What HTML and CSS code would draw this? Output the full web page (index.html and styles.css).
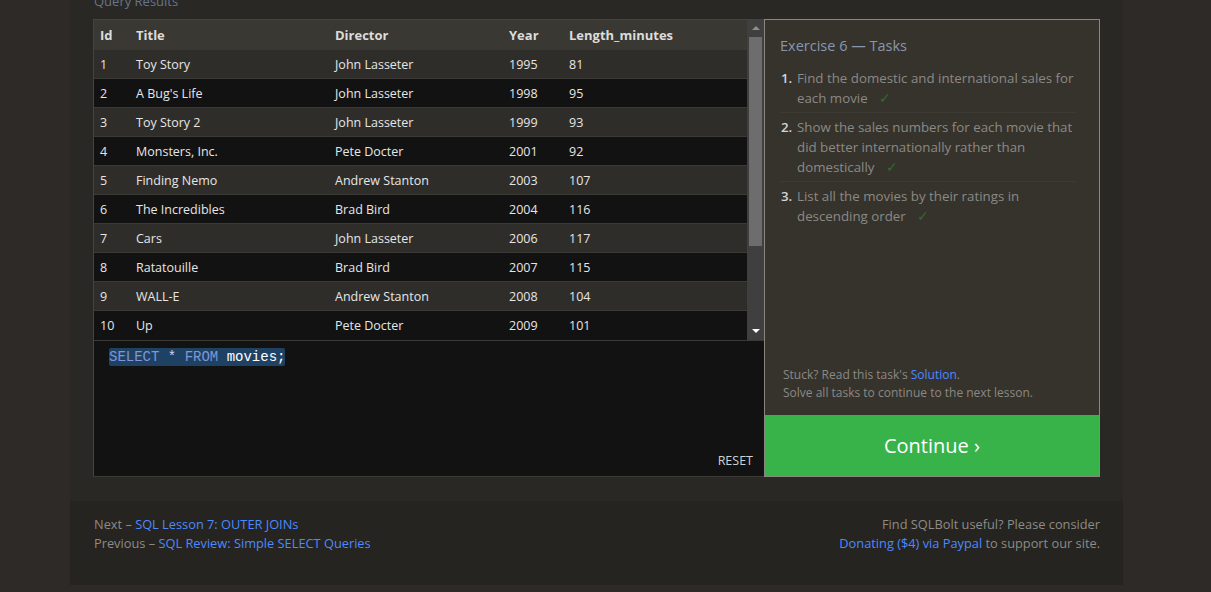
FILE: index.html
```html
<!DOCTYPE html>
<html>
<head>
<meta charset="utf-8">
<link rel="stylesheet" href="styles.css">
</head>
<body>
<div class="page">
  <div class="section-title">Query Results</div>
  <div class="exercise">
    <div class="left">
      <div class="results">
        <table class="grid">
          <thead>
            <tr><th class="c-id">Id</th><th class="c-title">Title</th><th class="c-dir">Director</th><th class="c-year">Year</th><th>Length_minutes</th></tr>
          </thead>
          <tbody>
            <tr><td>1</td><td>Toy Story</td><td>John Lasseter</td><td>1995</td><td>81</td></tr>
            <tr><td>2</td><td>A Bug's Life</td><td>John Lasseter</td><td>1998</td><td>95</td></tr>
            <tr><td>3</td><td>Toy Story 2</td><td>John Lasseter</td><td>1999</td><td>93</td></tr>
            <tr><td>4</td><td>Monsters, Inc.</td><td>Pete Docter</td><td>2001</td><td>92</td></tr>
            <tr><td>5</td><td>Finding Nemo</td><td>Andrew Stanton</td><td>2003</td><td>107</td></tr>
            <tr><td>6</td><td>The Incredibles</td><td>Brad Bird</td><td>2004</td><td>116</td></tr>
            <tr><td>7</td><td>Cars</td><td>John Lasseter</td><td>2006</td><td>117</td></tr>
            <tr><td>8</td><td>Ratatouille</td><td>Brad Bird</td><td>2007</td><td>115</td></tr>
            <tr><td>9</td><td>WALL-E</td><td>Andrew Stanton</td><td>2008</td><td>104</td></tr>
            <tr><td>10</td><td>Up</td><td>Pete Docter</td><td>2009</td><td>101</td></tr>
          </tbody>
        </table>
        <div class="scrollbar">
          <div class="arrow up"></div>
          <div class="thumb"></div>
          <div class="track-rest"></div>
          <div class="arrow down"></div>
        </div>
      </div>
      <div class="editor">
        <div class="code"><span class="sel"><span class="kw">SELECT</span> <span class="op">*</span> <span class="kw">FROM</span> <span class="id">movies;</span></span></div>
        <div class="editor-foot"><span class="reset">RESET</span></div>
      </div>
    </div>
    <div class="right">
      <div class="tasks">
        <div class="tasks-title">Exercise 6 — Tasks</div>
        <ol class="task-list">
          <li><span class="num">1.</span><span class="txt">Find the domestic and international sales for each movie <span class="check">✓</span></span></li>
          <li><span class="num">2.</span><span class="txt">Show the sales numbers for each movie that did better internationally rather than domestically <span class="check">✓</span></span></li>
          <li><span class="num">3.</span><span class="txt">List all the movies by their ratings in descending order <span class="check">✓</span></span></li>
        </ol>
      </div>
      <div class="help">
        <div>Stuck? Read this task's <a class="link">Solution</a>.</div>
        <div>Solve all tasks to continue to the next lesson.</div>
      </div>
      <div class="continue">Continue ›</div>
    </div>
  </div>
  <div class="footer">
    <div class="nav">
      <div>Next – <a class="link">SQL Lesson 7: OUTER JOINs</a></div>
      <div>Previous – <a class="link">SQL Review: Simple SELECT Queries</a></div>
    </div>
    <div class="donate">
      <div>Find SQLBolt useful? Please consider</div>
      <div><a class="link">Donating ($4) via Paypal</a> to support our site.</div>
    </div>
  </div>
</div>
</body>
</html>
```
FILE: styles.css
```css
* { box-sizing: border-box; }
html, body { margin: 0; padding: 0; }
body {
  background: #2d2a27;
  font-family: "Open Sans", "Noto Sans", sans-serif;
  color: #e0e0e0;
  height: 592px;
  overflow: hidden;
}
.page {
  width: 1053px;
  margin-left: 70px;
  background: #2a2825;
  padding: 0 23px 0 23px;
  height: 585px;
  display: flex;
  flex-direction: column;
}
.section-title {
  color: #66748a;
  font-size: 13px;
  line-height: 18px;
  margin-top: -8px;
  margin-left: 1px;
  height: 27px;
}
.exercise {
  display: flex;
  height: 460px;
}
.left {
  width: 671px;
  display: flex;
  flex-direction: column;
  border-left: 1px solid #45433f;
  border-top: 1px solid #45433f;
}
.results {
  display: flex;
  height: 320px;
  overflow: hidden;
}
.grid {
  flex: 1;
  border-collapse: collapse;
  font-size: 12.5px;
  align-self: flex-start;
}
.grid th {
  background: #3a3832;
  color: #dcdcdc;
  font-weight: 700;
  font-size: 13px;
  text-align: left;
  height: 30px;
  padding: 0 0 0 6px;
  border-bottom: 1px solid #3a3832;
}
.grid td {
  height: 29px;
  padding: 0 0 0 6px;
  border-bottom: 1px solid #3c3a36;
  color: #e6e6e6;
}
.grid tbody tr:nth-child(odd) td { background: #2f2d29; }
.grid tbody tr:nth-child(even) td { background: #121212; }
.grid tbody tr:last-child td { border-bottom: none; }
.c-id { width: 36px; }
.c-title { width: 199px; }
.c-dir { width: 174px; }
.c-year { width: 60px; }
.scrollbar {
  width: 17px;
  background: #3f3f3f;
  display: flex;
  flex-direction: column;
  align-items: center;
}
.arrow {
  width: 17px;
  height: 17px;
  display: flex;
  align-items: center;
  justify-content: center;
  flex: none;
}
.arrow.up::before {
  content: "";
  border-left: 4px solid transparent;
  border-right: 4px solid transparent;
  border-bottom: 4px solid #8e8e8e;
}
.arrow.down::before {
  content: "";
  border-left: 4px solid transparent;
  border-right: 4px solid transparent;
  border-top: 4px solid #ffffff;
}
.thumb {
  width: 13px;
  height: 209px;
  flex: none;
  background: #6d6d6d;
}
.track-rest { flex: 1; }
.editor {
  flex: 1;
  background: #121212;
  border-top: 1px solid #3c3a36;
  border-bottom: 1px solid #3c3a36;
  display: flex;
  flex-direction: column;
  padding: 7px 10px 7px 15px;
}
.code {
  flex: 1;
  font-family: "Liberation Mono", "DejaVu Sans Mono", monospace;
  font-size: 14px;
  line-height: 17px;
  margin-top: 1px;
}
.sel {
  background: #1f4264;
  border-radius: 2px;
  padding: 1px 0;
}
.kw { color: #7f97d6; }
.op { color: #d7cdf4; }
.id { color: #ffffff; }
.editor-foot {
  text-align: right;
  font-size: 12.5px;
  color: #d0d0d0;
  margin-right: 1px;
}
.right {
  width: 336px;
  background: #36332d;
  border: 1px solid #8a8780;
  display: flex;
  flex-direction: column;
}
.tasks {
  flex: 1;
  padding: 16px 15px 0 15px;
}
.tasks-title {
  color: #8896ad;
  font-size: 14.5px;
  line-height: 20px;
  margin-bottom: 12px;
}
.task-list {
  list-style: none;
  margin: 0;
  padding: 0;
  font-size: 13.3px;
  line-height: 20px;
  color: #8b8984;
}
.task-list li {
  display: flex;
  padding-bottom: 4px;
  margin-bottom: 4px;
  border-bottom: 1px solid #3d3a34;
  margin-right: 8px;
}
.task-list li:last-child { border-bottom: none; }
.num {
  width: 16px;
  margin-left: 1px;
  color: #d4d4d4;
  font-weight: 600;
}
.txt { flex: 1; }
.check {
  display: inline-block;
  color: #2e6b2e;
  margin-left: 8px;
  font-size: 14px;
  line-height: 20px;
  vertical-align: top;
}
.help {
  padding: 0 15px 13px 18px;
  font-size: 12px;
  line-height: 18px;
  color: #8b8984;
}
.link {
  color: #4d89ff;
  text-decoration: none;
}
.continue {
  height: 61px;
  background: #38b34a;
  color: #ffffff;
  font-size: 20px;
  display: flex;
  align-items: center;
  justify-content: center;
}
.footer {
  margin: 24px -23px 0 -23px;
  background: #252420;
  height: 84px;
  padding: 14px 23px 0 24px;
  display: flex;
  justify-content: space-between;
  font-size: 12.8px;
  line-height: 19px;
  color: #8d8b87;
}
.donate { text-align: right; }
```
